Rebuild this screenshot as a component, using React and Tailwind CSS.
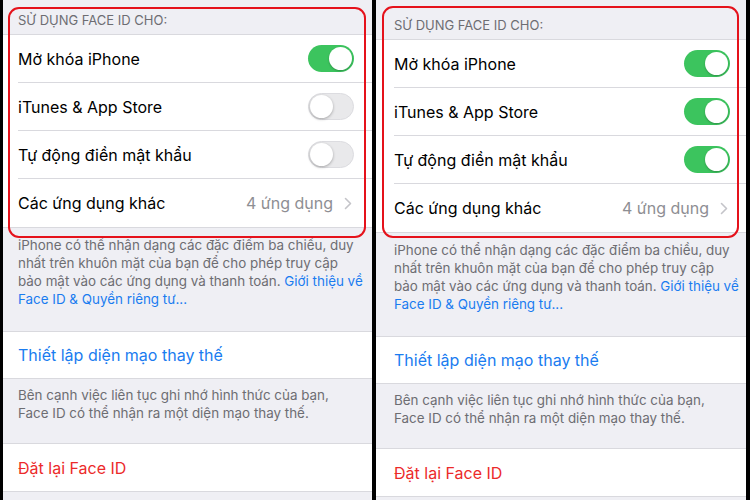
import React from "react";

function Toggle({ on }) {
  return on ? (
    <div className="w-[46px] h-[27px] rounded-full bg-[#3cc45e] relative shrink-0">
      <div className="absolute right-[2px] top-[2px] w-[23px] h-[23px] rounded-full bg-white shadow-[0_1px_2px_rgba(0,0,0,0.25)]" />
    </div>
  ) : (
    <div className="w-[46px] h-[27px] rounded-full bg-[#e9e9eb] relative shrink-0 border border-[#dcdce0]">
      <div className="absolute left-[1px] top-[1px] w-[23px] h-[23px] rounded-full bg-white shadow-[0_1px_3px_rgba(0,0,0,0.3)]" />
    </div>
  );
}

function Row({ label, children, pl, pr, last }) {
  return (
    <div className={`bg-white ${pl}`}>
      <div className={`h-[48px] flex items-center justify-between ${pr} ${last ? "" : "border-b border-[#d9d9de]"}`}>
        <span className="text-[16px] text-black">{label}</span>
        {children}
      </div>
    </div>
  );
}

function Panel({ w, head, pl, pr, chevPr, all, box }) {
  return (
    <div className={`relative h-[500px] bg-[#efeff4] shrink-0 overflow-hidden ${w}`}>
      <div className={`flex items-end text-[13px] text-[#6d6d72] pb-[4px] border-b border-[#d9d9de] ${head} ${pl}`}>
        SỬ DỤNG FACE ID CHO:
      </div>
      <Row label="Mở khóa iPhone" pl={pl} pr={pr}>
        <Toggle on />
      </Row>
      <Row label="iTunes & App Store" pl={pl} pr={pr}>
        <Toggle on={all} />
      </Row>
      <Row label="Tự động điền mật khẩu" pl={pl} pr={pr}>
        <Toggle on={all} />
      </Row>
      <Row label="Các ứng dụng khác" pl={pl} pr={chevPr} last>
        <div className="flex items-center gap-[11px] text-[16px] text-[#8e8e93]">
          <span>4 ứng dụng</span>
          <svg width="8" height="13" viewBox="0 0 8 13" fill="none">
            <path d="M1.5 1.5L6.5 6.5L1.5 11.5" stroke="#c4c4c9" strokeWidth="1.6" strokeLinecap="round" strokeLinejoin="round" />
          </svg>
        </div>
      </Row>
      <div className={`border-t border-[#d9d9de] pt-[8px] pb-[23px] whitespace-nowrap text-[13.4px] leading-[18px] text-[#6d6d72] ${pl}`}>
        iPhone có thể nhận dạng các đặc điểm ba chiều, duy
        <br />
        nhất trên khuôn mặt của bạn để cho phép truy cập
        <br />
        bảo mật vào các ứng dụng và thanh toán. <span className="text-[#1a7cf0]">Giới thiệu về</span>
        <br />
        <span className="text-[#1a7cf0]">Face ID &amp; Quyền riêng tư...</span>
      </div>
      <div className={`bg-white h-[48px] flex items-center text-[16px] text-[#1a7cf0] border-y border-[#d9d9de] ${pl}`}>
        Thiết lập diện mạo thay thế
      </div>
      <div className={`pt-[7px] pb-[21px] whitespace-nowrap text-[13.4px] leading-[18px] text-[#6d6d72] ${pl}`}>
        Bên cạnh việc liên tục ghi nhớ hình thức của bạn,
        <br />
        Face ID có thể nhận ra một diện mạo thay thế.
      </div>
      <div className={`bg-white h-[49px] flex items-center text-[16px] text-[#ec2a2a] border-y border-[#d9d9de] ${pl}`}>
        Đặt lại Face ID
      </div>
      <div className={`absolute border-[2.5px] border-[#e5121b] rounded-[11px] ${box}`} />
    </div>
  );
}

export default function App() {
  return (
    <div className="w-[750px] h-[500px] bg-black flex gap-[4px] pl-[3px] overflow-hidden font-['Inter','Noto_Sans',sans-serif]">
      <Panel
        w="w-[369px]"
        head="h-[35px]"
        pl="pl-[15px]"
        pr="pr-[18px]"
        chevPr="pr-[20px]"
        all={false}
        box="left-[5px] top-[7px] w-[358px] h-[231px]"
      />
      <Panel
        w="w-[370px]"
        head="h-[40px]"
        pl="pl-[18px]"
        pr="pr-[16px]"
        chevPr="pr-[18px]"
        all={true}
        box="left-[6px] top-[6px] w-[357px] h-[232px]"
      />
    </div>
  );
}
